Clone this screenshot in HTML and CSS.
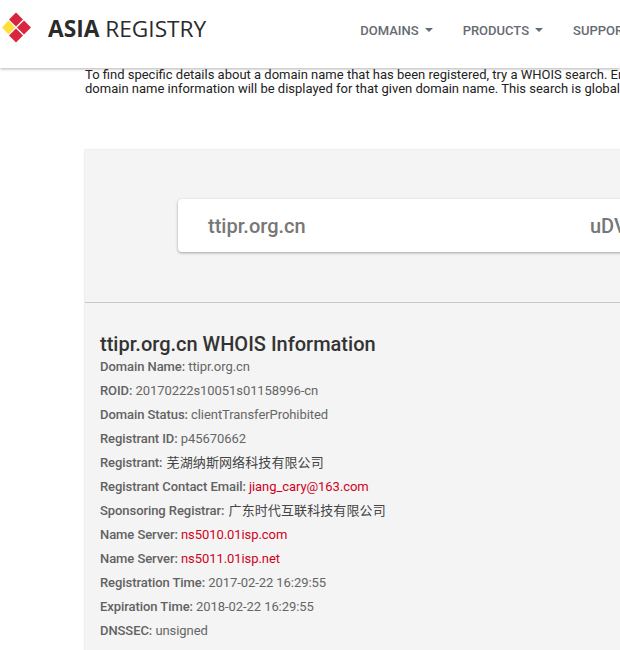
FILE: index.html
```html
<!DOCTYPE html>
<html lang="en">
<head>
<meta charset="utf-8">
<title>ttipr.org.cn WHOIS Information</title>
<link rel="stylesheet" href="styles.css">
</head>
<body>
<header class="site-header">
  <a class="logo">
    <svg class="logo-mark" width="32" height="32" viewBox="0 0 32 32">
      <path fill="#d7263d" d="M16 0.5 L23 7.5 L16 14.5 L9 7.5 Z"/>
      <path fill="#d7263d" d="M24 8.500 L31 15.500 L24 22.500 L17 15.500 Z"/>
      <path fill="#d7263d" d="M16 16.500 L23 23.500 L16 30.500 L9 23.500 Z"/>
      <path fill="#fde03a" d="M8.500 8.500 L15 15.500 L8.500 22.500 L2 15.500 Z"/>
    </svg>
    <span class="logo-text"><b>ASIA</b> REGISTRY</span>
  </a>
  <nav class="nav">
    <a class="nav-item">DOMAINS<i class="caret"></i></a>
    <a class="nav-item">PRODUCTS<i class="caret"></i></a>
    <a class="nav-item">SUPPORT<i class="caret"></i></a>
  </nav>
</header>
<main class="content">
  <p class="intro">To find specific details about a domain name that has been registered, try a WHOIS search. Enter the domain name below and<br>domain name information will be displayed for that given domain name. This search is global so results may vary by registry.</p>
  <section class="card">
    <div class="search-band">
      <div class="search-box">
        <span class="search-domain">ttipr.org.cn</span>
        <span class="search-code">uDVk</span>
      </div>
    </div>
    <div class="info">
      <h1 class="info-title">ttipr.org.cn WHOIS Information</h1>
      <div class="row"><span class="k">Domain Name:</span> ttipr.org.cn</div>
      <div class="row"><span class="k">ROID:</span> 20170222s10051s01158996-cn</div>
      <div class="row"><span class="k">Domain Status:</span> clientTransferProhibited</div>
      <div class="row"><span class="k">Registrant ID:</span> p45670662</div>
      <div class="row"><span class="k">Registrant:</span> <span class="cjk">芜湖纳斯网络科技有限公司</span></div>
      <div class="row"><span class="k">Registrant Contact Email:</span> <a class="link">jiang_cary@163.com</a></div>
      <div class="row"><span class="k">Sponsoring Registrar:</span> <span class="cjk">广东时代互联科技有限公司</span></div>
      <div class="row"><span class="k">Name Server:</span> <a class="link">ns5010.01isp.com</a></div>
      <div class="row"><span class="k">Name Server:</span> <a class="link">ns5011.01isp.net</a></div>
      <div class="row"><span class="k">Registration Time:</span> 2017-02-22 16:29:55</div>
      <div class="row"><span class="k">Expiration Time:</span> 2018-02-22 16:29:55</div>
      <div class="row"><span class="k">DNSSEC:</span> unsigned</div>
    </div>
  </section>
</main>
</body>
</html>
```
FILE: styles.css
```css
html, body {
  margin: 0;
  padding: 0;
  height: 650px;
  overflow: hidden;
  background: #fff;
  font-family: Roboto, "Noto Sans CJK SC", sans-serif;
}
.site-header {
  height: 68px;
  width: 620px;
  display: flex;
  align-items: center;
  box-sizing: border-box;
  padding-bottom: 12px;
  background: #fff;
  box-shadow: 0 1px 3px rgba(0, 0, 0, 0.3);
  white-space: nowrap;
  overflow: hidden;
  position: relative;
}
.logo {
  display: flex;
  align-items: center;
  flex: none;
}
.logo-mark { flex: none; }
.logo-text {
  margin-left: 16px;
  font-family: "Open Sans", sans-serif;
  font-size: 22.7px;
  color: #2b2b2b;
}
.logo-text b { font-weight: 700; }
.nav {
  display: flex;
  gap: 30px;
  margin-left: 154px;
  margin-top: 4px;
  flex: none;
}
.nav-item {
  display: flex;
  align-items: center;
  font-size: 13px;
  font-weight: 500;
  color: #666a72;
}
.caret {
  margin-left: 6px;
  width: 0;
  height: 0;
  border-left: 4px solid transparent;
  border-right: 4px solid transparent;
  border-top: 4px solid #666a72;
}
.content {
  width: 1170px;
  margin-left: 85px;
}
.intro {
  margin: 0;
  font-size: 13px;
  line-height: 14px;
  color: #222;
  white-space: nowrap;
}
.card {
  margin-top: 54px;
  background: #f4f4f4;
  box-shadow: 0 0 2px rgba(0, 0, 0, 0.2);
  height: 600px;
}
.search-band {
  height: 153px;
  box-sizing: border-box;
  padding: 49px 0 0 93px;
  border-bottom: 1px solid #c8c8c8;
}
.search-box {
  width: 900px;
  height: 53px;
  display: flex;
  align-items: center;
  background: #fff;
  border-radius: 4px;
  box-shadow: 0 1px 3px rgba(0, 0, 0, 0.35);
  font-size: 20px;
  font-weight: 500;
  color: #777;
}
.search-domain { margin-left: 30px; width: 382px; }
.info { padding: 31px 15px 0; }
.info-title {
  margin: 0;
  font-size: 20px;
  line-height: 21px;
  font-weight: 500;
  color: #333;
}
.row {
  font-size: 13px;
  line-height: 24px;
  color: #666;
  letter-spacing: -0.07px;
  white-space: nowrap;
}
.k { font-weight: 500; color: #626262; }
.cjk { color: #444; letter-spacing: 0.1px; margin-left: 1px; }
.link { color: #d0021b; }
```
